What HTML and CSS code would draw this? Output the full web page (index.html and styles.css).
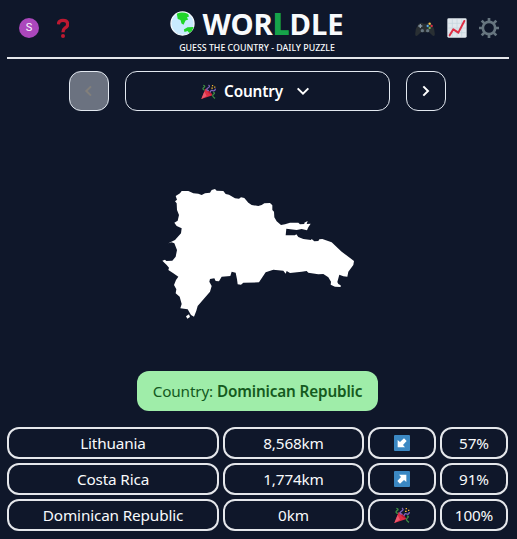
FILE: index.html
```html
<!DOCTYPE html>
<html lang="en">
<head>
<meta charset="utf-8">
<title>Worldle</title>
<link rel="stylesheet" href="styles.css">
</head>
<body>
<svg class="defs" aria-hidden="true">
  <symbol id="party" viewBox="0 0 48 48">
    <path d="M1 48L14 15Q27 20 37 36Z" fill="#dd2e44"/>
    <path d="M1 48L11 24L18 38Z" fill="#ea596e"/>
    <path d="M20 20Q30 22 35 34Q30 34 25 29T20 20Z" fill="#be1931"/>
    <path d="M7 4Q16 6 9 11T12 20M39 27Q47 28 40 33T45 46" fill="none" stroke="#3e8c43" stroke-width="4"/>
    <path d="M24 3Q31 8 22 13T25 22M30 27Q31 18 38 21T46 15" fill="none" stroke="#8064bd" stroke-width="4"/>
    <path d="M35 3h4v4h-4zM42 8h4v4h-4zM33 11h5v4h-5z" fill="#f2b32f"/>
  </symbol>
  <symbol id="arrow" viewBox="0 0 48 48">
    <rect width="48" height="48" rx="3" fill="#3b88c3"/>
    <path d="M15 11H37V33L30 27L18 38L10 30L21 18Z" fill="#fff"/>
  </symbol>
</svg>
<main class="page">
  <header class="header">
    <div class="tools">
      <span class="avatar">S</span>
      <svg class="question" viewBox="0 0 36 60"><path d="M4 19Q5 7 18 7Q32 7 32 19Q32 27 23 31Q18 34 18 43" fill="none" stroke="#be1931" stroke-width="10"/><circle cx="18" cy="54" r="6" fill="#be1931"/></svg>
    </div>
    <div class="brand">
      <h1 class="title">
        <svg class="globe" viewBox="0 0 74 74"><circle cx="37" cy="37" r="34" fill="#c9ebff" stroke="#f5fbff" stroke-width="4"/><path d="M20 8Q36 1 54 9L56 16L50 19L54 25L46 28L40 41L34 37L31 27L23 24Z" fill="#20d52a"/><path d="M41 55L52 48L70 47Q67 59 57 65L52 59L43 62Z" fill="#20d52a"/></svg>
        <span class="word">WOR<b class="green">L</b>DLE</span>
      </h1>
      <p class="tagline">GUESS THE COUNTRY - DAILY PUZZLE</p>
    </div>
    <div class="tools">
      <svg class="tool" viewBox="0 0 60 60"><path d="M1 52Q-1 34 10 19Q17 10 25 17H35Q43 10 50 19Q61 34 59 52Q56 56 51 51L42 43H18L9 51Q4 56 1 52Z" fill="#292f33"/><path d="M16 18v12M10 24h12" stroke="#8899a6" stroke-width="4"/><circle cx="22" cy="38" r="5" fill="#66757f"/><circle cx="38" cy="38" r="5" fill="#66757f"/><circle cx="44" cy="17" r="3.5" fill="#ffcc4d"/><circle cx="38" cy="24" r="3.5" fill="#55acee"/><circle cx="50" cy="24" r="3.5" fill="#dd2e44"/><circle cx="44" cy="30" r="3.5" fill="#77b255"/></svg>
      <svg class="tool" viewBox="0 0 60 60"><rect x="1" y="1" width="58" height="58" rx="4" fill="#e1e8ed"/><path d="M4 16H56M4 30H56M4 44H56M16 4V56M30 4V56M44 4V56" stroke="#c2d3dd" stroke-width="2"/><path d="M8 52L19 34L34 44L52 9" fill="none" stroke="#dd2e44" stroke-width="6" stroke-linejoin="round" stroke-linecap="round"/></svg>
      <svg class="tool" viewBox="0 0 60 60"><g stroke="#66757f" stroke-width="8"><path d="M30 0V12M30 48V60M0 30H12M48 30H60M8 8L18 18M42 42L52 52M52 8L42 18M18 42L8 52"/><circle cx="30" cy="30" r="18.500" fill="none"/></g></svg>
    </div>
  </header>
  <nav class="rounds">
    <button class="step disabled" aria-label="Previous"><svg class="chevron" viewBox="0 0 24 24"><path d="M15 5L8 12L15 19"/></svg></button>
    <button class="picker"><svg class="emoji small"><use href="#party"/></svg><span class="picker-label">Country</span><svg class="chevron" viewBox="0 0 24 24"><path d="M4 8L12 16L20 8"/></svg></button>
    <button class="step" aria-label="Next"><svg class="chevron" viewBox="0 0 24 24"><path d="M8 5L15 12L8 19"/></svg></button>
  </nav>
  <section class="map">
    <svg class="shape" viewBox="0 0 645 435" fill="#fff"><path d="M62 48L75 40L80 33L100 33L115 40L130 41L140 45L150 40L165 38L170 30L180 27L185 32L205 33L212 42L222 44L240 55L252 56L258 52L268 54L280 68L290 75L310 78L320 75L328 70L345 69L352 76L352 90L357 95L358 112L365 124L378 135L390 133L405 128L430 128L435 133L448 132L448 128L458 123L455 132L467 131L460 142L456 151L440 147L425 150L394 146L392 166L420 166L424 163L430 171L445 177L468 180L470 177L478 184L490 183L493 178L502 177L530 187L560 215L597 243L595 255L580 275L577 290L565 289L553 284L547 306L550 312L557 316L557 321L540 320L527 314L528 305L520 292L505 282L490 283L460 278L455 273L440 275L405 279L395 273L392 281L385 272L355 269L332 277L320 295L312 307L265 308L258 314L248 313L246 298L242 278L230 275L226 288L200 290L192 304L182 303L178 295L165 297L163 305L170 318L165 335L128 378L124 392L117 410L108 405L98 388L76 385L80 372L74 350L62 340L64 328L57 315L63 300L70 290L55 280L40 270L42 263L35 255L22 242L30 239L34 243L52 242L62 230L66 210L58 190L50 187L40 190L60 180L78 160L80 145L65 138L58 128L68 122L72 105L66 90L65 70L60 64L66 59Z"/><path d="M93 409L102 403L105 411L97 416Z"/></svg>
  </section>
  <p class="answer">Country: <b class="answer-name">Dominican Republic</b></p>
  <section class="guesses">
    <div class="cell">Lithuania</div><div class="cell">8,568km</div><div class="cell"><svg class="emoji down"><use href="#arrow"/></svg></div><div class="cell">57%</div>
    <div class="cell">Costa Rica</div><div class="cell">1,774km</div><div class="cell"><svg class="emoji"><use href="#arrow"/></svg></div><div class="cell">91%</div>
    <div class="cell">Dominican Republic</div><div class="cell">0km</div><div class="cell"><svg class="emoji"><use href="#party"/></svg></div><div class="cell">100%</div>
  </section>
</main>
</body>
</html>
```
FILE: styles.css
```css
* { box-sizing: border-box; }
body {
  margin: 0;
  background: #0f172a;
  color: #f8fafc;
  font: 15.3px/24px "Noto Sans", "Open Sans", sans-serif;
  letter-spacing: -0.15px;
  overflow: hidden;
}
p, h1 { margin: 0; }
svg { display: block; flex: none; }
.defs { display: none; }
.page {
  width: 502px;
  margin-left: 7px;
  display: flex;
  flex-direction: column;
}
.header {
  height: 59px;
  border-bottom: 2px solid #e5e7eb;
  display: grid;
  grid-template-columns: 1fr auto 1fr;
}
.tools {
  display: flex;
  align-items: center;
  gap: 12px;
  height: 56px;
  padding-left: 12px;
}
.tools:last-child { justify-content: flex-end; padding: 0 10px 0 0; }
.avatar {
  width: 20px;
  height: 20px;
  border-radius: 50%;
  background: #ab47bc;
  font: 11px/20px Roboto, sans-serif;
  text-align: center;
}
.question { width: 12px; height: 20px; margin-left: 6px; }
.tool { width: 20px; height: 20px; }
.brand { width: 178px; padding-right: 2px; }
.title {
  height: 42px;
  padding-top: 5px;
  display: flex;
  align-items: center;
  justify-content: center;
  gap: 7px;
  font-size: 29.3px;
  line-height: 38px;
  letter-spacing: -0.1px;
}
.globe { width: 25px; height: 25px; margin-top: -1px; }
.word { white-space: nowrap; }
.green { color: #16a34a; }
.tagline {
  font-size: 8.8px;
  line-height: 12px;
  font-weight: 500;
  letter-spacing: 0;
  text-align: center;
  white-space: nowrap;
}
.rounds {
  display: flex;
  justify-content: center;
  gap: 16px;
  padding: 12px 1px 0 0;
}
button {
  height: 40px;
  padding: 0;
  border: 1px solid #e2e8f0;
  border-radius: 12px;
  background: none;
  color: #fff;
  font: inherit;
  font-weight: 600;
  letter-spacing: inherit;
  display: flex;
  align-items: center;
  justify-content: center;
}
.step { width: 40px; }
.step.disabled { background: #6b7280; color: #827f7b; }
.picker { width: 265px; padding-right: 3px; }
.picker-label { margin: 0 12px 0 8px; }
.chevron {
  width: 16px;
  height: 16px;
  fill: none;
  stroke: currentColor;
  stroke-width: 3;
}
.map {
  height: 260px;
  padding: 69px 0 0 148px;
}
.shape { width: 215px; height: 145px; }
.answer {
  align-self: center;
  width: 241px;
  height: 40px;
  margin-right: 1px;
  border-radius: 12px;
  background: #9feda9;
  color: #145a1e;
  line-height: 41px;
  text-align: center;
  white-space: nowrap;
}
.answer-name { font-weight: 600; }
.guesses {
  display: grid;
  grid-template-columns: 212px 141px 68px 68px;
  grid-auto-rows: 32px;
  gap: 4px;
  margin-top: 16px;
}
.cell {
  border: 2px solid #e5e7eb;
  border-radius: 12px;
  display: flex;
  align-items: center;
  justify-content: center;
  white-space: nowrap;
}
.emoji { width: 16px; height: 16px; }
.emoji.small { width: 15px; height: 15px; }
.down { transform: rotate(180deg); }
```
